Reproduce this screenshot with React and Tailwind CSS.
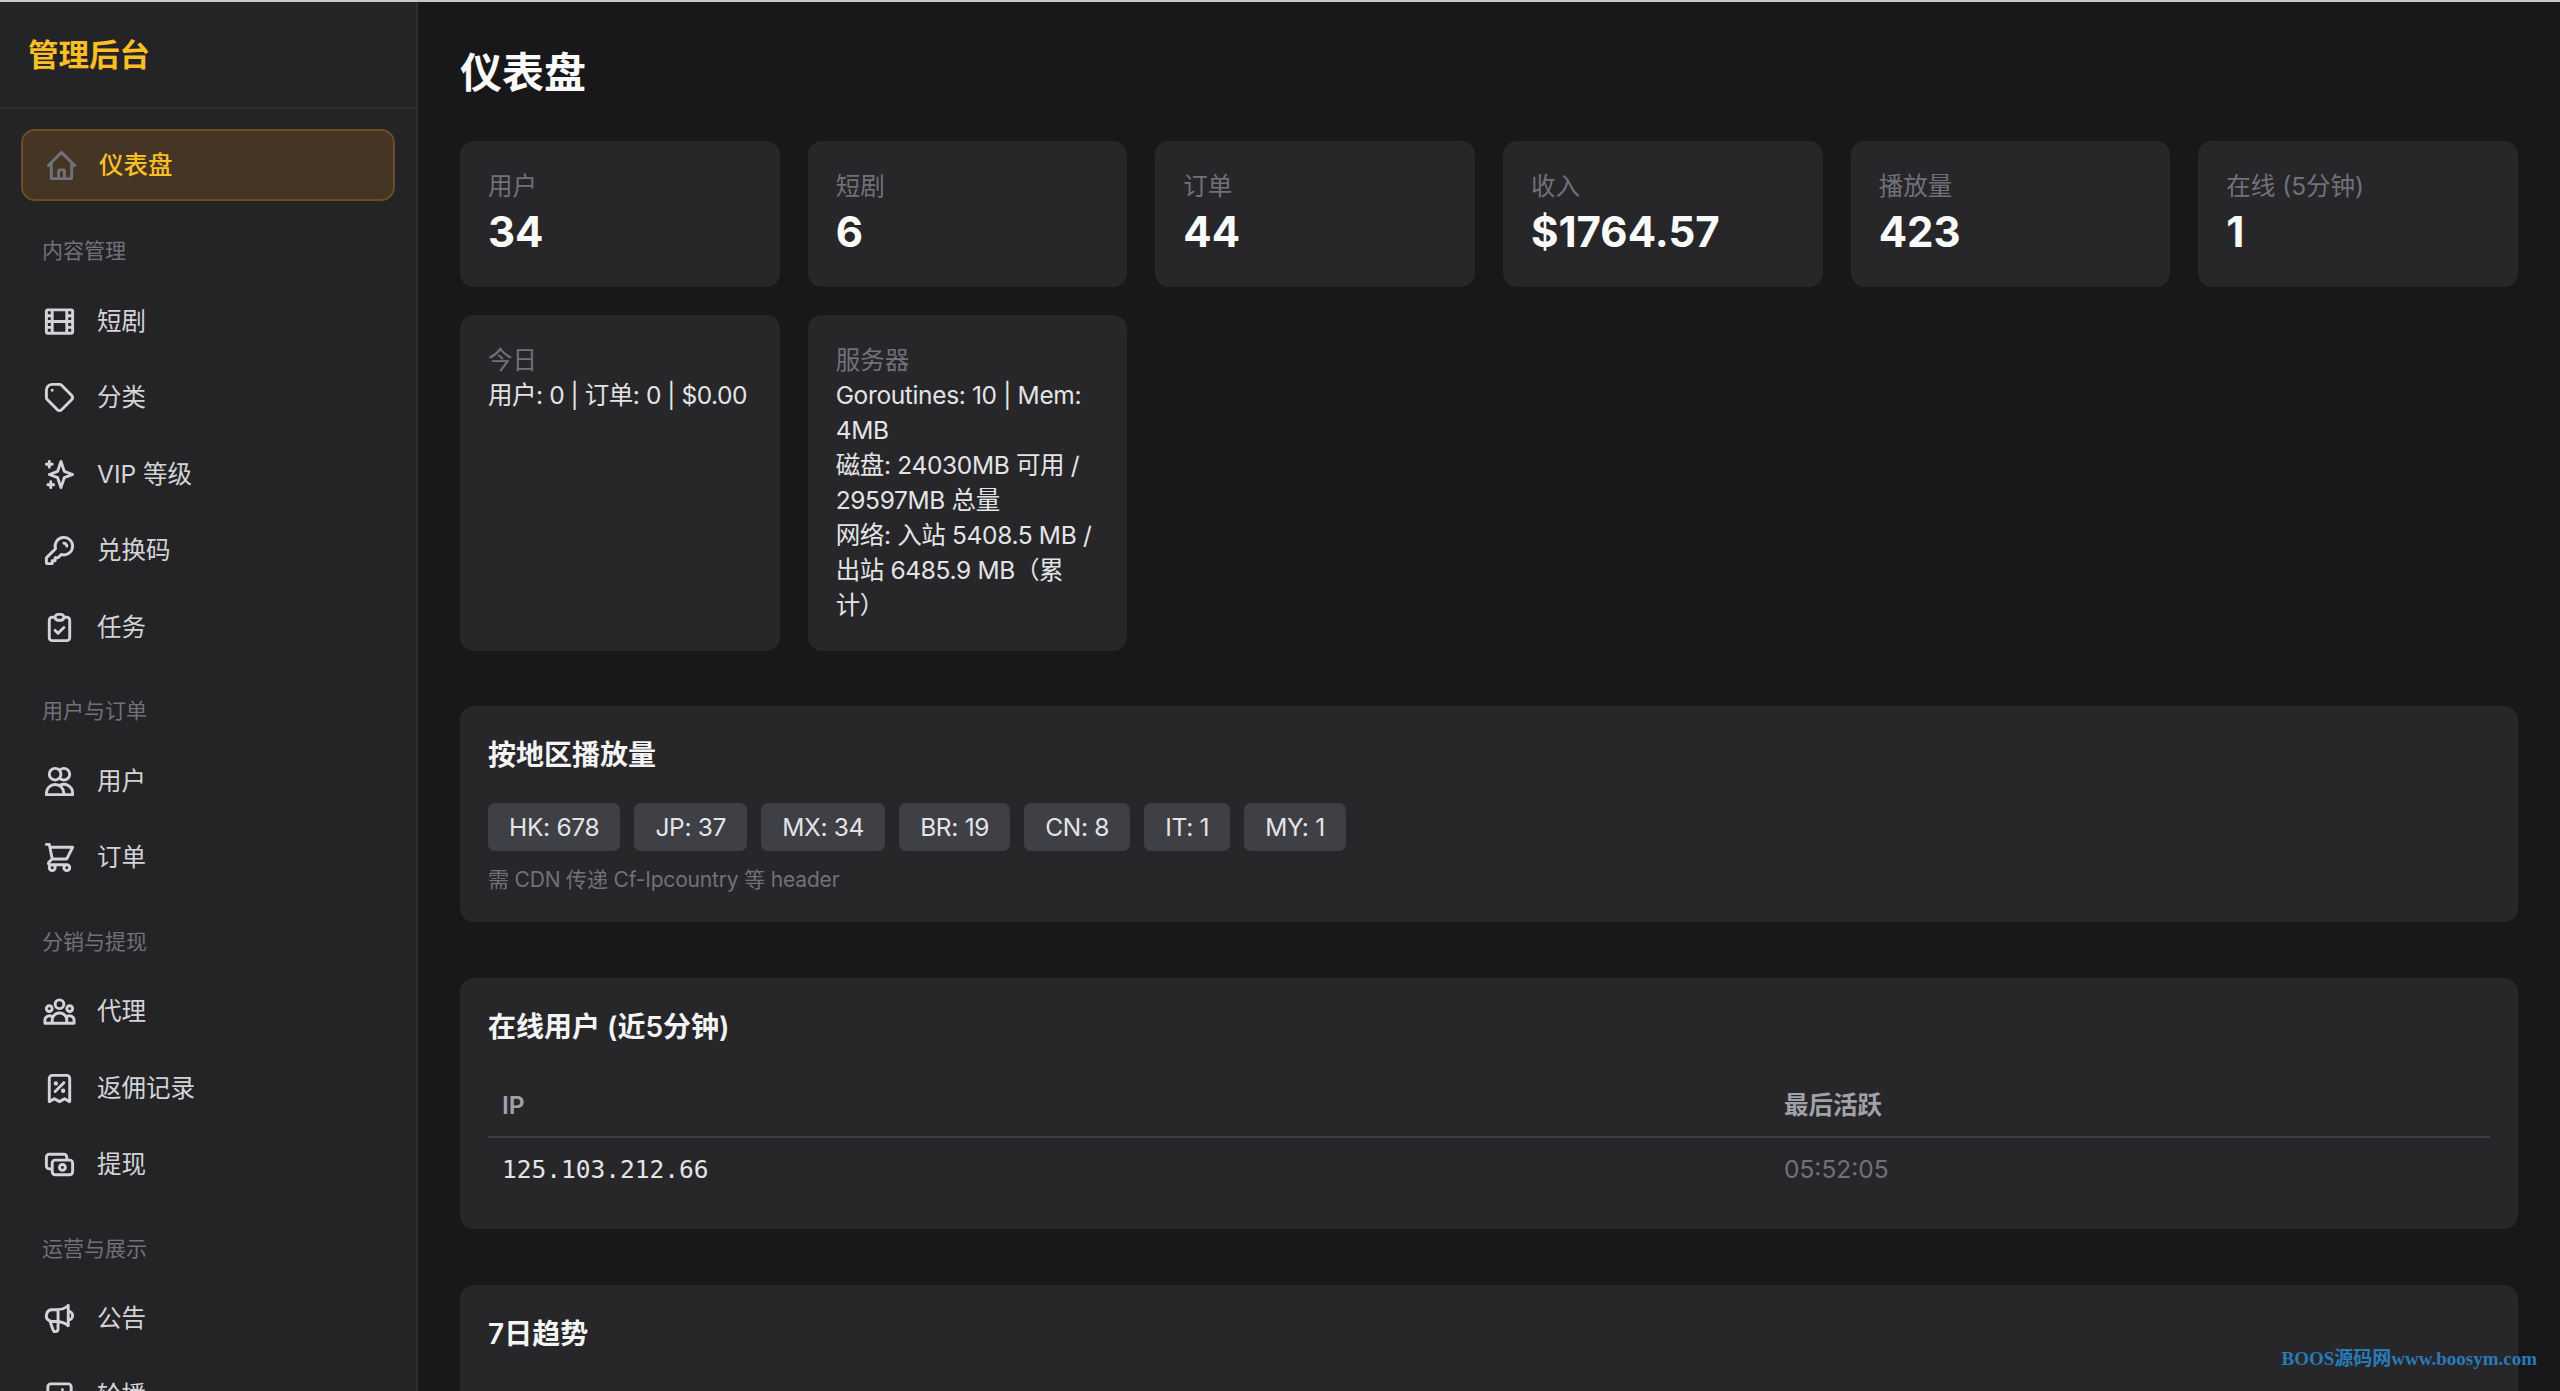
import {
  HiOutlineHome,
  HiOutlineFilm,
  HiOutlineTag,
  HiOutlineSparkles,
  HiOutlineKey,
  HiOutlineClipboardCheck,
  HiOutlineUsers,
  HiOutlineShoppingCart,
  HiOutlineUserGroup,
  HiOutlineReceiptTax,
  HiOutlineCash,
  HiOutlineSpeakerphone,
  HiOutlinePhotograph,
} from 'react-icons/hi';

const fontSans = "font-['Inter','Noto_Sans_CJK_SC',sans-serif]";

const navGroups = [
  {
    title: '内容管理',
    items: [
      { label: '短剧', icon: HiOutlineFilm },
      { label: '分类', icon: HiOutlineTag },
      { label: 'VIP 等级', icon: HiOutlineSparkles },
      { label: '兑换码', icon: HiOutlineKey },
      { label: '任务', icon: HiOutlineClipboardCheck },
    ],
  },
  {
    title: '用户与订单',
    items: [
      { label: '用户', icon: HiOutlineUsers },
      { label: '订单', icon: HiOutlineShoppingCart },
    ],
  },
  {
    title: '分销与提现',
    items: [
      { label: '代理', icon: HiOutlineUserGroup },
      { label: '返佣记录', icon: HiOutlineReceiptTax },
      { label: '提现', icon: HiOutlineCash },
    ],
  },
  {
    title: '运营与展示',
    items: [
      { label: '公告', icon: HiOutlineSpeakerphone },
      { label: '轮播', icon: HiOutlinePhotograph },
    ],
  },
];

const stats = [
  { label: '用户', value: '34' },
  { label: '短剧', value: '6' },
  { label: '订单', value: '44' },
  { label: '收入', value: '$1764.57' },
  { label: '播放量', value: '423' },
  { label: '在线 (5分钟)', value: '1' },
];

const regions = ['HK: 678', 'JP: 37', 'MX: 34', 'BR: 19', 'CN: 8', 'IT: 1', 'MY: 1'];

const NavItem = ({ label, icon: Icon }) => (
  <a className="flex h-[72px] items-center gap-5 rounded-[14px] px-[21px] text-[24.5px] text-[#d4d4d8]">
    <Icon className="h-[35px] w-[35px] shrink-0" />
    <span>{label}</span>
  </a>
);

const Section = ({ title, children }) => (
  <section className="mb-14 rounded-[14px] bg-[#27272a] p-7">
    <h2 className="mb-[27px] text-[28px] leading-[42px] font-semibold text-[#f4f4f5]">{title}</h2>
    {children}
  </section>
);

export default function App() {
  return (
    <div className={`flex h-screen overflow-hidden border-t-2 border-[#c8c8c8] bg-[#18181b] ${fontSans}`}>
      <aside className="w-[418px] shrink-0 overflow-hidden border-r-2 border-[#2f2f33] bg-[#242426]">
        <div className="flex h-[107px] items-center border-b-2 border-[#2f2f33] px-7">
          <h1 className="text-[30.5px] font-semibold text-[#fbbf24]">管理后台</h1>
        </div>
        <nav className="flex flex-col px-[21px] pt-5">
          <a className="mb-[2px] flex h-[72px] shrink-0 items-center gap-5 rounded-[14px] border-2 border-[#6b4d1e] bg-[#443525] px-[21px] text-[24.5px] font-medium text-[#fbbf24]">
            <HiOutlineHome className="h-[35px] w-[35px] shrink-0 text-[#71717a]" />
            <span>仪表盘</span>
          </a>
          {navGroups.map((group) => (
            <div key={group.title} className="mt-[34px]">
              <div className="mb-[20px] px-[21px] text-[21px] leading-[28px] text-[#71717a]">{group.title}</div>
              <div className="flex flex-col gap-[4.5px]">
                {group.items.map((item) => (
                  <NavItem key={item.label} {...item} />
                ))}
              </div>
            </div>
          ))}
        </nav>
      </aside>

      <main className="min-w-0 flex-1 overflow-hidden px-[42px] pt-[46px]">
        <h1 className="mb-[44px] text-[42px] leading-[49px] font-semibold text-[#fafafa]">仪表盘</h1>

        <div className="mb-[55px] grid grid-cols-6 gap-7">
          {stats.map((stat) => (
            <div key={stat.label} className="rounded-[14px] bg-[#27272a] p-7">
              <div className="text-[24.5px] leading-[35px] text-[#71717a]">{stat.label}</div>
              <div className="text-[42px] leading-[55px] font-bold text-[#fafafa]">{stat.value}</div>
            </div>
          ))}
          <div className="rounded-[14px] bg-[#27272a] p-7">
            <div className="text-[24.5px] leading-[35px] text-[#71717a]">今日</div>
            <div className="text-[24.5px] leading-[35px] tracking-[-0.45px] text-[#e4e4e7]">用户: 0 | 订单: 0 | $0.00</div>
          </div>
          <div className="rounded-[14px] bg-[#27272a] p-7">
            <div className="text-[24.5px] leading-[35px] text-[#71717a]">服务器</div>
            <div className="text-[24.5px] leading-[35px] tracking-[-0.35px] text-[#e4e4e7]">
              <div>Goroutines: 10 | Mem: 4MB</div>
              <div>磁盘: 24030MB 可用 / 29597MB 总量</div>
              <div>
                网络: 入站 5408.5 MB / 出站 6485.9 MB（累
                <br />
                计）
              </div>
            </div>
          </div>
        </div>

        <Section title="按地区播放量">
          <div className="flex flex-wrap gap-[14px]">
            {regions.map((region) => (
              <span key={region} className="rounded-[7px] bg-[#3f3f46] px-[21px] py-[6.5px] text-[24.5px] leading-[35px] tracking-[-0.3px] text-[#e4e4e7]">
                {region}
              </span>
            ))}
          </div>
          <p className="mt-[15px] text-[21px] leading-[28px] tracking-[-0.17px] text-[#71717a]">需 CDN 传递 Cf-Ipcountry 等 header</p>
        </Section>

        <Section title="在线用户 (近5分钟)">
          <table className="w-full table-fixed border-collapse text-left text-[24.5px] leading-[35px]">
            <thead>
              <tr className="border-b-2 border-[#3f3f46]">
                <th className="w-[1282px] px-[14px] py-[13px] font-semibold text-[#a1a1aa]">IP</th>
                <th className="px-[14px] py-[13px] font-semibold text-[#a1a1aa]">最后活跃</th>
              </tr>
            </thead>
            <tbody>
              <tr>
                <td className="px-[14px] py-[14px] font-['DejaVu_Sans_Mono',monospace] text-[#e4e4e7]">125.103.212.66</td>
                <td className="px-[14px] py-[14px] text-[#71717a]">05:52:05</td>
              </tr>
            </tbody>
          </table>
        </Section>

        <Section title="7日趋势">
          <div className="h-[200px]" />
        </Section>
      </main>

      <span className="absolute right-[23px] bottom-[18px] font-['Liberation_Serif','Noto_Sans_CJK_SC',serif] text-[19px] font-bold text-[#2a7ab8]">
        BOOS源码网www.boosym.com
      </span>
    </div>
  );
}
